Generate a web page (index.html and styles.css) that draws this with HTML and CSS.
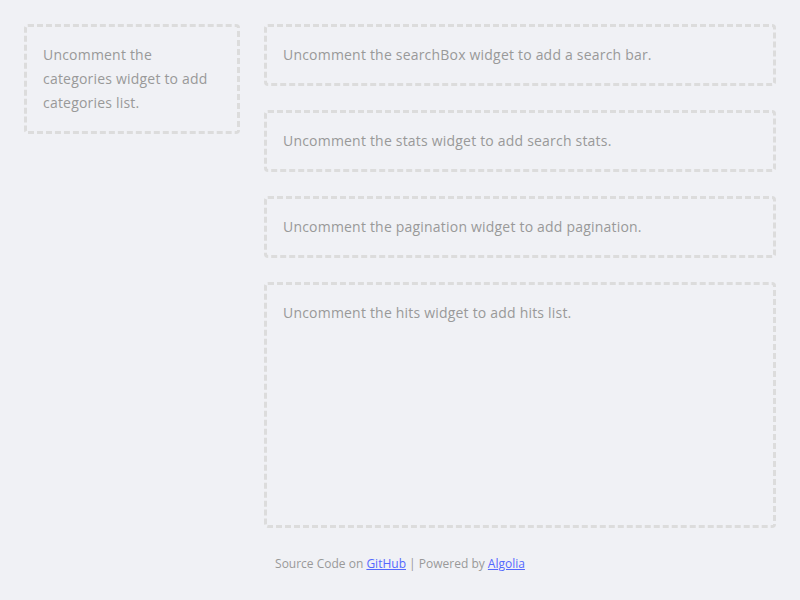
FILE: index.html
```html
<!DOCTYPE html>
<html lang="en">
<head>
<meta charset="utf-8">
<title>Search</title>
<link rel="stylesheet" href="styles.css">
</head>
<body>
<div class="container">
  <aside class="left-panel">
    <div class="placeholder">Uncomment the categories widget to add categories list.</div>
  </aside>
  <main class="right-panel">
    <div class="placeholder">Uncomment the searchBox widget to add a search bar.</div>
    <div class="placeholder">Uncomment the stats widget to add search stats.</div>
    <div class="placeholder">Uncomment the pagination widget to add pagination.</div>
    <div class="placeholder hits">Uncomment the hits widget to add hits list.</div>
  </main>
</div>
<footer class="footer">Source Code on <a href="#">GitHub</a> | Powered by <a href="#">Algolia</a></footer>
</body>
</html>
```
FILE: styles.css
```css
html, body {
  margin: 0;
  padding: 0;
}
body {
  background: #f0f1f5;
  font-family: "Open Sans", "Liberation Sans", sans-serif;
  font-size: 14px;
  color: #999;
}
.container {
  display: grid;
  grid-template-columns: 216px 1fr;
  gap: 24px;
  padding: 24px 24px 0;
  align-items: start;
}
.right-panel {
  display: flex;
  flex-direction: column;
  gap: 24px;
}
.placeholder {
  border: 3px dashed #dcdcdc;
  border-radius: 4px;
  padding: 16px;
  line-height: 24px;
  letter-spacing: 0.2px;
}
.hits {
  min-height: 208px;
}
.footer {
  text-align: center;
  font-size: 12px;
  line-height: 20px;
  padding: 26px 0 0;
  color: #999;
}
.footer a {
  color: #5468ff;
}
```
